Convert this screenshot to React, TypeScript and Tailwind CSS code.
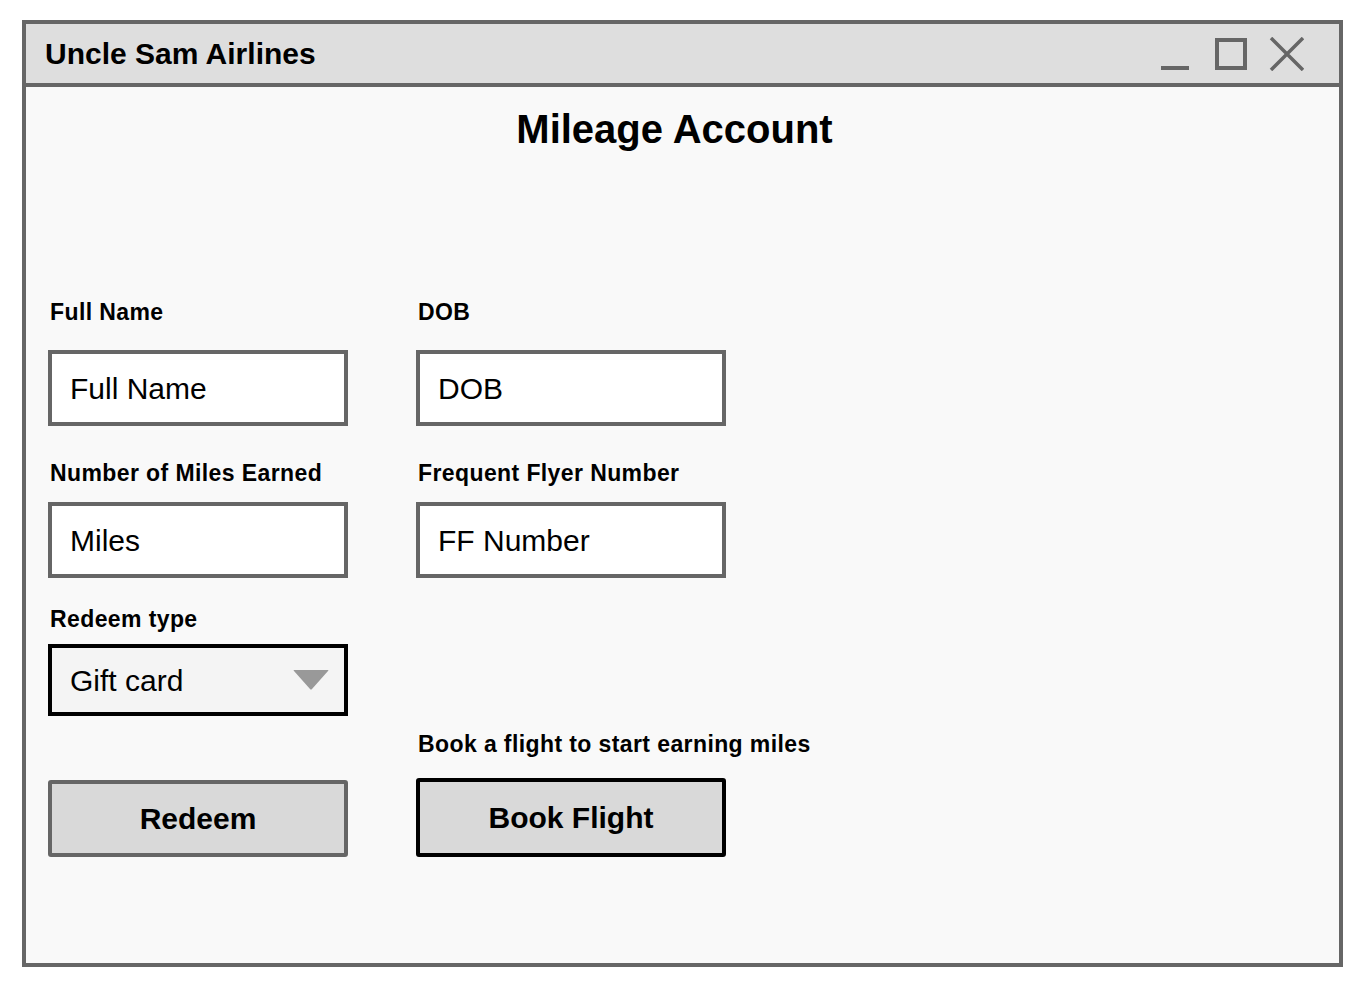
import React from "react";

const font = { fontFamily: '"Liberation Sans", Arial, sans-serif' };

const Label = ({ children }: { children: React.ReactNode }) => (
    <div className="pl-[2px] whitespace-nowrap text-[23px] leading-[24px] font-bold tracking-[0.4px] text-black">{children}</div>
);

const Field = ({ value, wide }: { value: string; wide?: boolean }) => (
    <div
        className={`${wide ? "w-[310px]" : "w-[300px]"} h-[76px] border-4 border-[#666666] bg-white flex items-center pl-[18px] text-[30px] text-black`}
    >
        {value}
    </div>
);

const WindowControls = () => (
    <svg width="143" height="34" viewBox="0 0 143 34" fill="none">
        <rect x="0" y="29" width="28" height="4" fill="#666666" />
        <rect x="56" y="3" width="28" height="28" stroke="#666666" strokeWidth="4" />
        <path d="M110 1 L142 33 M142 1 L110 33" stroke="#666666" strokeWidth="3.5" />
    </svg>
);

export default function App() {
    return (
        <div className="w-[1358px] h-[990px] bg-white pt-[20px] pl-[22px]" style={font}>
            <div className="w-[1321px] h-[947px] border-4 border-[#666666] bg-[#f9f9f9] flex flex-col">
                {/* title bar */}
                <div className="h-[63px] shrink-0 border-b-4 border-[#666666] bg-[#dedede] flex items-center justify-between pl-[19px] pr-[35px]">
                    <span className="text-[30px] font-bold text-black">Uncle Sam Airlines</span>
                    <WindowControls />
                </div>

                <div className="flex-1 flex flex-col pt-[19px]">
                    <h1 className="w-full pr-[16px] text-center text-[40px] leading-[46px] font-bold text-black">
                        Mileage Account
                    </h1>

                    <div className="pl-[22px] mt-[148px] flex flex-col">
                        <div className="flex gap-[68px]">
                            <div className="w-[300px]"><Label>Full Name</Label></div>
                            <div className="w-[310px]"><Label>DOB</Label></div>
                        </div>
                        <div className="flex gap-[68px] mt-[26px]">
                            <Field value="Full Name" />
                            <Field value="DOB" wide />
                        </div>

                        <div className="flex gap-[68px] mt-[35px]">
                            <div className="w-[300px]"><Label>Number of Miles Earned</Label></div>
                            <div className="w-[310px]"><Label>Frequent Flyer Number</Label></div>
                        </div>
                        <div className="flex gap-[68px] mt-[17px]">
                            <Field value="Miles" />
                            <Field value="FF Number" wide />
                        </div>

                        <div className="mt-[29px] w-[300px]"><Label>Redeem type</Label></div>
                        <div className="mt-[13px] w-[300px] h-[72px] border-4 border-black bg-[#f4f4f4] flex items-center justify-between pl-[18px] pr-[15px] text-[30px] text-black">
                            <span>Gift card</span>
                            <svg width="36" height="20" viewBox="0 0 36 20">
                                <path d="M1 0 H35 Q36 0 35 1 L19 19 Q18 20 17 19 L1 1 Q0 0 1 0 Z" fill="#999999" />
                            </svg>
                        </div>

                        <div className="flex gap-[68px] mt-[16px]">
                            <div className="w-[300px]" />
                            <div className="w-[310px]"><Label>Book a flight to start earning miles</Label></div>
                        </div>

                        <div className="flex items-end gap-[68px] mt-[22px]">
                            <button className="w-[300px] h-[77px] border-4 border-[#666666] rounded-[3px] bg-[#d9d9d9] text-[30px] font-bold text-black">
                                Redeem
                            </button>
                            <button className="w-[310px] h-[79px] border-4 border-black rounded-[3px] bg-[#d9d9d9] text-[30px] font-bold text-black">
                                Book Flight
                            </button>
                        </div>
                    </div>
                </div>
            </div>
        </div>
    );
}
